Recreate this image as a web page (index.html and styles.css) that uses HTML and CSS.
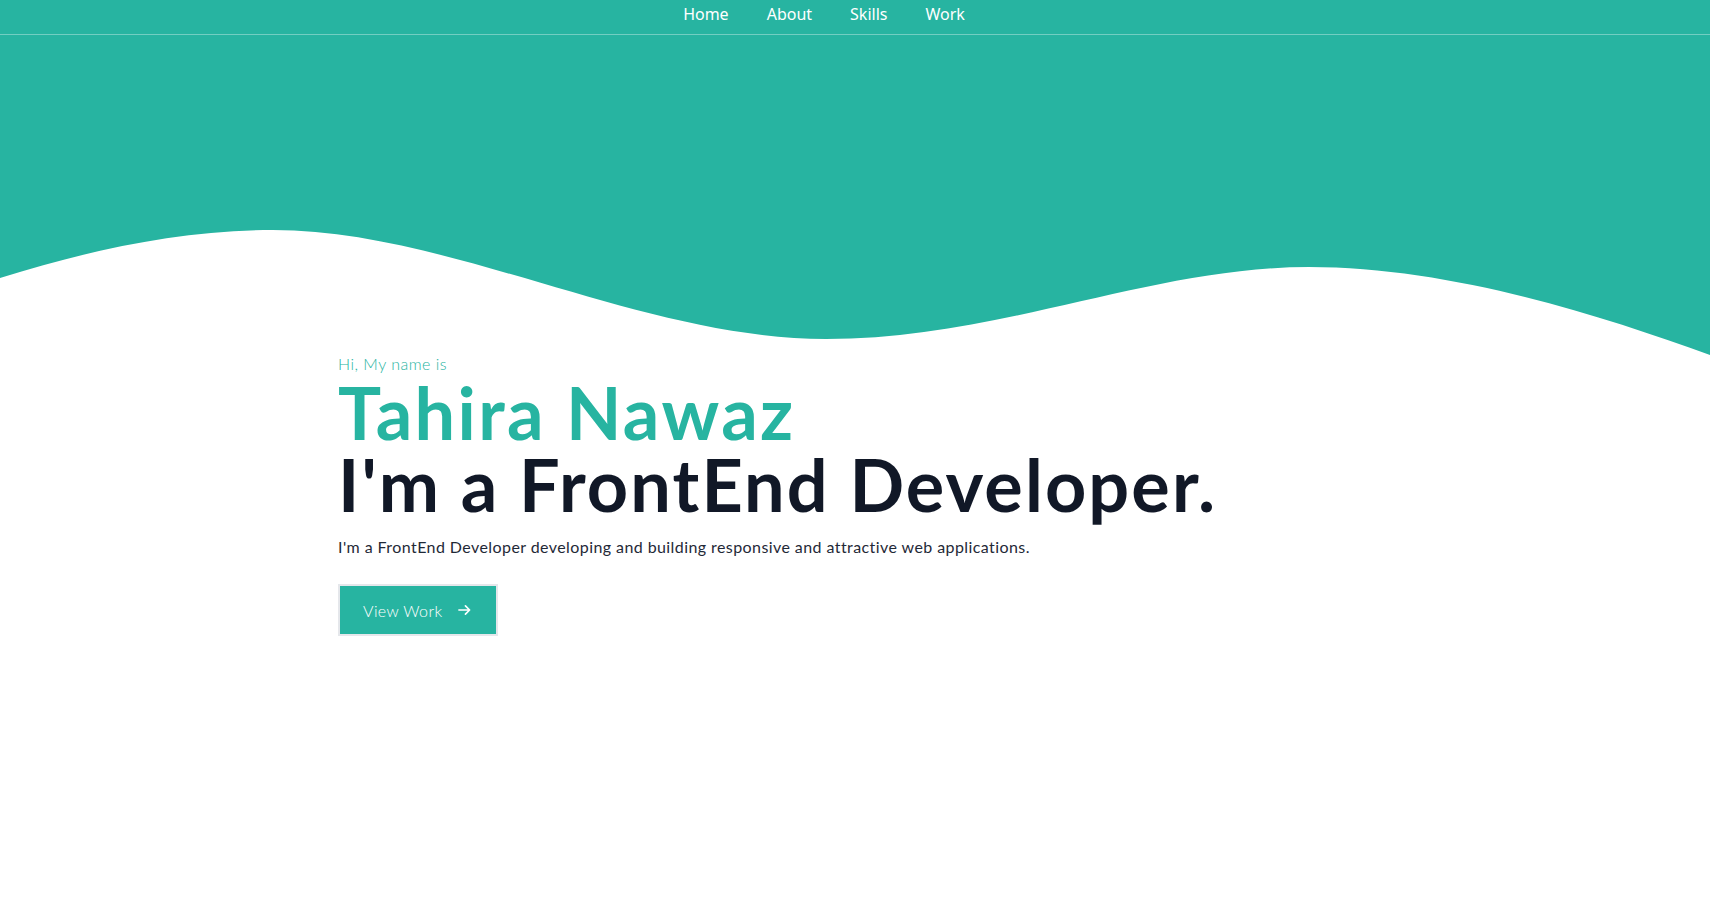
FILE: index.html
```html
<!DOCTYPE html>
<html lang="en">
<head>
<meta charset="utf-8">
<title>Tahira Nawaz</title>
<link rel="stylesheet" href="styles.css">
</head>
<body>
<header class="top">
  <nav class="nav">
    <a class="nav-link" href="#">Home</a>
    <a class="nav-link" href="#">About</a>
    <a class="nav-link" href="#">Skills</a>
    <a class="nav-link" href="#">Work</a>
  </nav>
  <svg class="wave" viewBox="0 0 1710 320" preserveAspectRatio="none" aria-hidden="true">
    <path d="M0,243 C90,215 180,195 273,195 C450,195 640,304 826,304 C1000,304 1150,232 1309,232 C1450,232 1600,280 1710,320 L1710,0 L0,0 Z" fill="#27b4a1"/>
  </svg>
</header>
<main class="hero">
  <p class="greet">Hi, My name is</p>
  <h1 class="name">Tahira Nawaz</h1>
  <h2 class="role">I'm a FrontEnd Developer.</h2>
  <p class="intro">I'm a FrontEnd Developer developing and building responsive and attractive web applications.</p>
  <a class="btn" href="#">View Work
    <svg class="arrow" viewBox="0 0 14 12" aria-hidden="true"><path d="M1 6H12.5M8 1.5L12.5 6L8 10.5" fill="none" stroke="#fff" stroke-width="1.8" stroke-linecap="round" stroke-linejoin="round"/></svg>
  </a>
</main>
</body>
</html>
```
FILE: styles.css
```css
* { box-sizing: border-box; }
html, body { margin: 0; padding: 0; background: #fff; }
body { font-family: "Lato", "Noto Sans", sans-serif; }

.top { background: #27b4a1; }
.nav {
  height: 35px;
  display: flex;
  justify-content: center;
  align-items: center;
  gap: 38px;
  padding-right: 62px;
  border-bottom: 1px solid rgba(255,255,255,0.35);
}
.nav-link {
  color: #fff;
  text-decoration: none;
  font-family: "Noto Sans", sans-serif;
  font-size: 16px;
  line-height: 20px;
  padding-bottom: 7px;
}
.wave { display: block; width: 100%; height: 320px; background: #fff; }

.hero {
  width: 1034px;
  margin: -3px auto 0;
  position: relative;
}
.greet {
  margin: 0;
  color: #27b4a1;
  font-size: 16px;
  line-height: 24px;
  font-weight: 300;
  letter-spacing: 0.5px;
}
.name {
  margin: 0;
  color: #27b4a1;
  font-size: 72px;
  line-height: 72px;
  font-weight: 700;
  letter-spacing: 2.4px;
}
.role {
  margin: 0;
  color: #111827;
  font-size: 72px;
  line-height: 72px;
  font-weight: 700;
  letter-spacing: 2.1px;
}
.intro {
  margin: 15px 0 0;
  color: #1f2937;
  font-size: 16px;
  line-height: 24px;
  letter-spacing: 0.42px;
}
.btn {
  margin-top: 25px;
  display: inline-flex;
  align-items: center;
  gap: 15px;
  height: 52px;
  padding: 0 25px 0 23px;
  background: #27b4a1;
  border: 2px solid #e5e7eb;
  color: #fff;
  text-decoration: none;
  font-size: 16px;
  font-weight: 300;
  letter-spacing: 0.4px;
}
.arrow { width: 13px; height: 12px; }
```
